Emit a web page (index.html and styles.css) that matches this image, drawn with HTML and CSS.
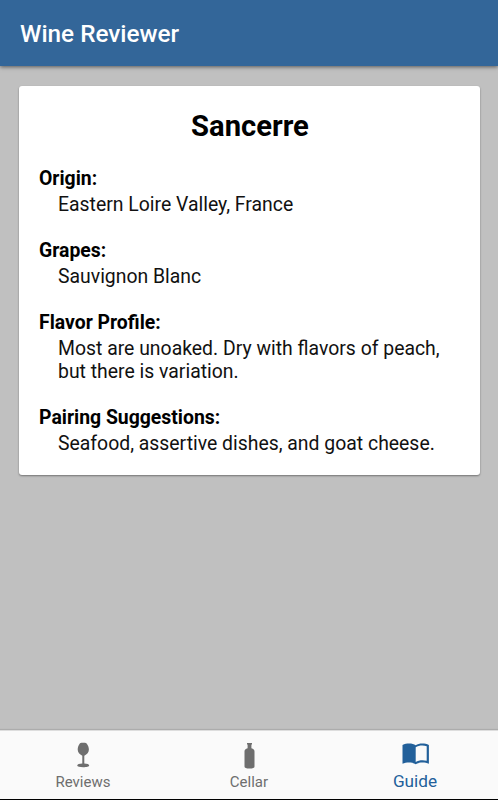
FILE: index.html
```
<!DOCTYPE html>
<html lang="en">
<head>
    <meta charset="UTF-8">
    <meta name="viewport" content="width=device-width, initial-scale=1.0">
    <title>Wine Reviewer</title>
    <link rel="stylesheet" href="styles.css">
</head>
<body>
    <div class="app">
        <header class="toolbar">
            <h1 class="toolbar-title">Wine Reviewer</h1>
        </header>

        <main class="content">
            <article class="card">
                <h2 class="card-title">Sancerre</h2>
                <section class="detail">
                    <h3>Origin:</h3>
                    <p>Eastern Loire Valley, France</p>
                </section>
                <section class="detail">
                    <h3>Grapes:</h3>
                    <p>Sauvignon Blanc</p>
                </section>
                <section class="detail">
                    <h3>Flavor Profile:</h3>
                    <p>Most are unoaked. Dry with flavors of peach, but there is variation.</p>
                </section>
                <section class="detail">
                    <h3>Pairing Suggestions:</h3>
                    <p>Seafood, assertive dishes, and goat cheese.</p>
                </section>
            </article>
        </main>

        <nav class="tabs">
            <a class="tab">
                <svg class="tab-icon" viewBox="0 0 32 32">
                    <path d="M13 3.2C14.5 2.6 18 2.6 19.4 3.2C21 5 21.9 7.4 21.9 9.6C21.9 12.4 20 14.6 17.3 15.7V23.6C20.2 23.8 22.2 24.4 22.2 25.5C22.2 26.7 19.5 27.2 16.2 27.2S10.2 26.7 10.2 25.5C10.2 24.4 12.4 23.8 15.3 23.6V15.7C12.6 14.6 10.7 12.4 10.7 9.6C10.7 7.4 11.5 5 13 3.2Z"/>
                </svg>
                <span class="tab-label">Reviews</span>
            </a>
            <a class="tab">
                <svg class="tab-icon" viewBox="0 0 32 32">
                    <path d="M14 3H19V4.5H18.4V8.2C20.5 8.9 21.5 9.7 21.5 11.5V26.5Q21.5 28.6 16.5 28.6T11.5 26.5V11.5C11.5 9.7 12.5 8.9 14.6 8.2V4.5H14Z"/>
                </svg>
                <span class="tab-label">Cellar</span>
            </a>
            <a class="tab active">
                <svg class="tab-icon" viewBox="0 0 32 32">
                    <path fill-rule="evenodd" d="M16.7 5.2C13.5 3 7.5 3 3.5 5V23.8C7.5 22 13 22 16.7 24.2C20.5 22 25.9 22 29.9 23.8V5C25.9 3 20 3 16.7 5.2ZM16.7 7.2C19.5 5.4 24.5 5.2 27.7 6.3V20.8C24 19.9 19.5 20.2 16.7 22Z"/>
                </svg>
                <span class="tab-label">Guide</span>
            </a>
        </nav>
    </div>
</body>
</html>
```
FILE: styles.css
```
* {
    margin: 0;
    padding: 0;
    box-sizing: border-box;
}

body {
    font-family: Roboto, sans-serif;
    background: #c0c0c0;
    color: #000;
}

.app {
    display: flex;
    flex-direction: column;
    height: 100vh;
    border-bottom: 1px solid #000;
}

.toolbar {
    display: flex;
    align-items: center;
    height: 66px;
    padding: 0 20px;
    background: #336699;
    box-shadow: 0 1px 4px rgba(0, 0, 0, 0.55);
}

.toolbar-title {
    color: #fff;
    font-size: 24.3px;
    font-weight: 500;
}

.content {
    flex: 1;
    padding: 20px 18px 0 19px;
}

.card {
    padding: 22px 19px 20px 20px;
    background: #fff;
    border-radius: 3px;
    box-shadow: 0 1px 2px rgba(0, 0, 0, 0.4);
}

.card-title {
    margin-bottom: 22px;
    font-size: 29.2px;
    font-weight: 700;
    line-height: 37px;
    text-align: center;
}

.detail {
    margin-bottom: 23px;
    font-size: 19.4px;
    line-height: 23px;
}

.detail:last-child {
    margin-bottom: 0;
}

.detail h3 {
    margin-bottom: 3px;
    font-size: inherit;
    font-weight: 700;
}

.detail p {
    padding-left: 19px;
    color: #111;
}

.tabs {
    display: flex;
    height: 69px;
    background: #fafafa;
    border-top: 1px solid #ddd;
    box-shadow: 0 -1px 1px rgba(0, 0, 0, 0.1);
}

.tab {
    flex: 1;
    display: flex;
    flex-direction: column;
    align-items: center;
    padding-top: 9px;
    color: #6e6e6e;
}

.tab-icon {
    width: 32px;
    height: 32px;
    fill: currentColor;
}

.tab-label {
    font-size: 15px;
    line-height: 20px;
}

.tab.active {
    color: #22609a;
}

.tab.active .tab-label {
    font-size: 17.2px;
    line-height: 18px;
}
```
